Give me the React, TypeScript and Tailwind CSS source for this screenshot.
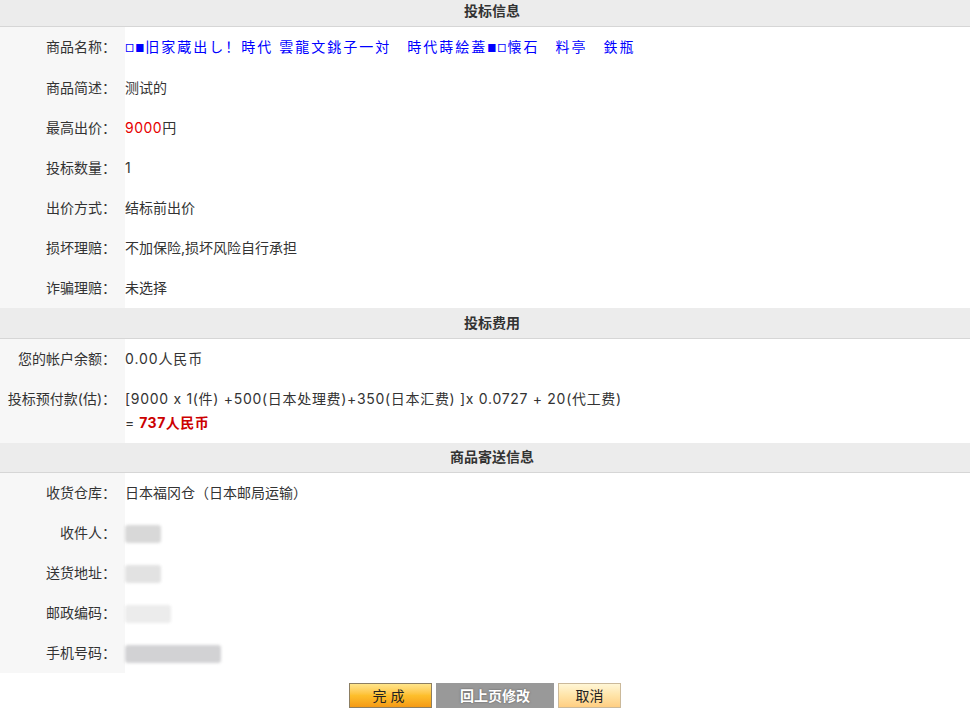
import React from 'react';

const FONT = 'Inter, "Noto Sans CJK SC", "Noto Sans", sans-serif';

const Section: React.FC<{ title: string; first?: boolean }> = ({ title, first }) => (
  <tr>
    <td
      colSpan={2}
      className={`bg-[#ececec] border-b border-[#d6d6d6] text-center font-bold text-[#333] pl-[14px] ${first ? 'h-[26px] leading-[22px] pb-[4px]' : 'h-[30px]'}`}
    >
      {title}
    </td>
  </tr>
);

const Row: React.FC<{ label: string; children?: React.ReactNode }> = ({ label, children }) => (
  <tr>
    <td className="w-[125px] bg-[#f7f7f7] text-right align-top py-2 pr-[9px] whitespace-nowrap">{label}</td>
    <td className="py-2 align-top">{children}</td>
  </tr>
);

const Blur: React.FC<{ w: number; tone?: string }> = ({ w, tone = 'bg-[#dcdcdc]' }) => (
  <span className={`inline-block align-middle h-[18px] rounded-[3px] blur-[1.5px] ${tone}`} style={{ width: w }} />
);

const Sq: React.FC<{ s: string }> = ({ s }) => <span className="text-[10px] tracking-[1px]">{s}</span>;

export default function App() {
  return (
    <div
      className="w-[970px] bg-white text-[14px] leading-6 text-[#333] [font-feature-settings:'calt'_0]"
      style={{ fontFamily: FONT }}
    >
      <table className="w-[970px] border-collapse">
        <tbody>
          <Section title="投标信息" first />
          <Row label="商品名称：">
            <span className="text-[#0000ff] tracking-[2px]">
              <Sq s="□■" />旧家蔵出し！時代 雲龍文銚子一対　時代蒔絵蓋<Sq s="■□" />懐石　料亭　鉄瓶
            </span>
          </Row>
          <Row label="商品简述：">测试的</Row>
          <Row label="最高出价：">
            <span className="text-[#e60000] tracking-[0.5px]">9000</span>円
          </Row>
          <Row label="投标数量：">1</Row>
          <Row label="出价方式：">结标前出价</Row>
          <Row label="损坏理赔：">不加保险,损坏风险自行承担</Row>
          <Row label="诈骗理赔：">未选择</Row>
          <Section title="投标费用" />
          <Row label="您的帐户余额：">
            <span className="tracking-[0.9px]">0.00人民币</span>
          </Row>
          <Row label="投标预付款(估)：">
            <div className="tracking-[0.7px]">[9000 x 1(件) +500(日本处理费)+350(日本汇费) ]x 0.0727 + 20(代工费)</div>
            <div className="tracking-[0.5px]">
              = <span className="font-bold text-[#cc0000]">737人民币</span>
            </div>
          </Row>
          <Section title="商品寄送信息" />
          <Row label="收货仓库：">日本福冈仓（日本邮局运输）</Row>
          <Row label="收件人：">
            <Blur w={36} tone="bg-[#d8d8d8]" />
          </Row>
          <Row label="送货地址：">
            <Blur w={36} tone="bg-[#e2e2e2]" />
          </Row>
          <Row label="邮政编码：">
            <Blur w={46} tone="bg-[#ececec]" />
          </Row>
          <Row label="手机号码：">
            <Blur w={96} tone="bg-[#d2d2d4]" />
          </Row>
        </tbody>
      </table>
      <div className="flex justify-center items-center gap-[4px] mt-[10px]">
        <button className="w-[83px] h-[25px] border border-[#8c7e62] bg-gradient-to-b from-[#ffe58a] via-[#fdbf2c] to-[#f59a14] text-[#222] text-[14px] leading-none tracking-[4px]">
          完成
        </button>
        <button className="w-[118px] h-[25px] bg-[#999999] text-white font-bold text-[14px] leading-none [text-shadow:0_0_2px_#555]">
          回上页修改
        </button>
        <button className="w-[63px] h-[25px] border border-[#cbb99a] bg-gradient-to-b from-[#fff6d6] via-[#ffe4a8] to-[#ffce82] text-[#222] text-[14px] leading-none">
          取消
        </button>
      </div>
    </div>
  );
}
